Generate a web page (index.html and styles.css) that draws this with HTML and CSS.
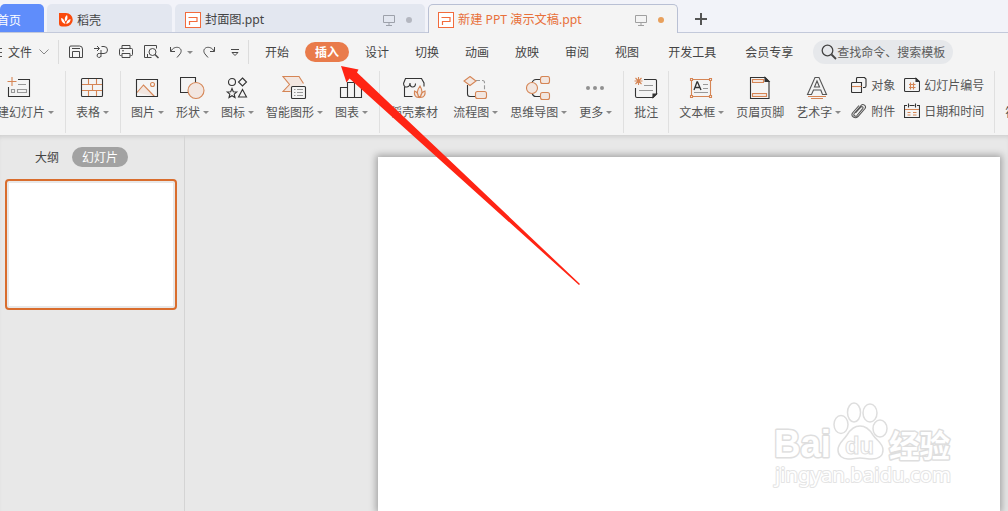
FILE: index.html
```html
<!DOCTYPE html>
<html lang="zh-CN">
  <head>
    <meta charset="UTF-8" />
    <meta name="viewport" content="width=device-width, initial-scale=1.0" />
    <link rel="stylesheet" href="styles.css">
    <title>新建 PPT 演示文稿.ppt</title>
  </head>
  <body>

    <!-- document tabs -->
    <div class="tab-bar">
      <div class="tab home">首页</div>
      <div class="tab docer">
        <svg width="14" height="15" viewBox="0 0 14 15"><path d="M0 1h7a6.500 6.500 0 0 1 0 13.500H3a3 3 0 0 1-3-3z" fill="#fa4a0c"/><path d="M6.500 12C3 11 2 8.500 2.200 6c2 .5 3.300 2 4.300 6zM6.500 9.500C5 7 6 4.500 8 3c1 2.500 .5 5-1.500 6.500zM7.300 12c0-2.500 1.500-4.500 4.200-5 .2 2.500-1.200 4.500-4.200 5z" fill="#fff"/></svg>
        <span>稻壳</span>
      </div>
      <div class="tab file">
        <svg width="16" height="16" viewBox="0 0 16 16" fill="none" stroke="#f26b3c"><rect x=".5" y=".5" width="15" height="15" fill="#fff"/><path d="M3.500 5.500h8.500v4H4.500V13" stroke-width="1.200"/></svg>
        <span class="name">封面图.ppt</span>
        <svg width="12" height="12" viewBox="0 0 12 12" fill="none" stroke="#9da1aa"><path d="M1 1.500h10.500v7H.5v-7zM6 8.500v3M3 11.500h6"/></svg>
        <i class="dot"></i>
      </div>
      <div class="tab file active">
        <svg width="16" height="16" viewBox="0 0 16 16" fill="none" stroke="#f26b3c"><rect x=".5" y=".5" width="15" height="15" fill="#fff"/><path d="M3.500 5.500h8.500v4H4.500V13" stroke-width="1.200"/></svg>
        <span class="name">新建 PPT 演示文稿.ppt</span>
        <svg width="12" height="12" viewBox="0 0 12 12" fill="none" stroke="#a0a0a0"><path d="M1 1.500h10.500v7H.5v-7zM6 8.500v3M3 11.500h6"/></svg>
        <i class="dot"></i>
      </div>
      <svg class="plus" width="12" height="12" viewBox="0 0 12 12" stroke="#555" stroke-width="2"><path d="M6 0v12M0 6h12"/></svg>
    </div>

    <!-- menu row -->
    <div class="menu-bar">
      <div class="file-menu">
        <svg width="4" height="12" viewBox="0 0 4 12" stroke="#555"><path d="M0 2.500h2M0 6.500h2M0 10.500h2"/></svg>
        <span>文件</span>
        <svg width="10" height="6" viewBox="0 0 10 6" fill="none" stroke="#888"><path d="M.5 .5L5 5 9.500 .5"/></svg>
      </div>
      <div class="quick">
        <svg width="16" height="16" viewBox="0 0 16 16"><path d="M1.500 3v10.500h13V5q0-3-3-3H3q-1.500 0-1.500 1zM4.500 13.500v-6h7v6M4 4.500h8"/></svg>
        <svg width="16" height="16" viewBox="0 0 16 16"><path d="M1 4.500h5M4 2l2.500 2.500L4 7M8.500 2.500H11a3.500 3.500 0 0 1 0 7H6.500M8 6v6.500M8 12a2 2 0 1 1-1.500-2.500"/></svg>
        <svg width="16" height="16" viewBox="0 0 16 16"><path d="M4 4.500v-3h8v3M3.500 11.500h-1a1 1 0 0 1-1-1v-5a1 1 0 0 1 1-1h11a1 1 0 0 1 1 1v5a1 1 0 0 1-1 1h-1M4 9.500h8v4H4zM4 6.800h2"/></svg>
        <svg width="17" height="16" viewBox="0 0 17 16"><path d="M13.500 4.500v-3h-12v12h7M4.500 10v3.500"/><circle cx="9.500" cy="8" r="3.500"/><path d="M12 10.500l3.500 3.500" stroke-width="1.500"/></svg>
        <svg class="undo" width="14" height="14" viewBox="0 0 14 14"><path d="M1.500 2v4.500H6M1.800 6.200C4 2.500 7 2 9.500 2.500c3.500 1.500 3 4.500 1.500 6.500L8 12.500"/></svg>
        <i class="caret"></i>
        <svg class="redo" width="14" height="14" viewBox="0 0 14 14"><path d="M12.500 2v4.500H8M12.200 6.200C10 2.500 7 2 4.500 2.500c-3.500 1.500-3 4.500-1.500 6.500L6 12.500"/></svg>
        <svg class="more" width="8" height="9" viewBox="0 0 8 9"><path d="M0 1.500h8M1 4.500h6L4 7.500z"/></svg>
      </div>
      <div class="menus">
        <span>开始</span>
        <span class="current">插入</span>
        <span>设计</span>
        <span>切换</span>
        <span>动画</span>
        <span>放映</span>
        <span>审阅</span>
        <span>视图</span>
        <span class="wide">开发工具</span>
        <span class="wide">会员专享</span>
      </div>
      <div class="search">
        <svg width="16" height="16" viewBox="0 0 16 16" fill="none" stroke="#444" stroke-width="1.300"><circle cx="6.500" cy="6.500" r="5.300"/><path d="M10.500 10.500l4.500 4.500" stroke-width="1.800"/></svg>
        <span>查找命令、搜索模板</span>
      </div>
    </div>

    <!-- insert ribbon -->
    <div class="ribbon">
      <div class="group first">
        <div class="tool">
          <svg width="25" height="25" viewBox="0 0 25 25"><path d="M11 3.500h11.500v17H1.500V11"/><path class="o" d="M5 1v9M.5 5.500h9"/><path class="g" d="M11 8.500h8M4.500 13.500h3v3h-3zM10.500 13.500h9v3h-9z"/></svg>
          <label>新建幻灯片<i class="caret"></i></label>
        </div>
      </div>
      <div class="group">
        <div class="tool">
          <svg width="25" height="25" viewBox="0 0 25 25"><path class="o" d="M2 8.500h21M2 14.500h21M8.500 3v5.500M8.500 14.500v6M12.500 8.500v6M16.500 3v5.500M16.500 14.500v6"/><rect x="1.500" y="2.500" width="21" height="18" rx="1"/></svg>
          <label>表格<i class="caret"></i></label>
        </div>
      </div>
      <div class="group">
        <div class="tool">
          <svg width="25" height="25" viewBox="0 0 25 25"><path class="o f" d="M2 16.500L8.500 9l11 11.500"/><path d="M1.500 3.500h21v17h-21z"/><circle class="o" cx="17.500" cy="8.500" r="2"/></svg>
          <label>图片<i class="caret"></i></label>
        </div>
        <div class="tool">
          <svg width="25" height="25" viewBox="0 0 25 25"><path d="M15.500 8V1.500h-15v15H8"/><circle class="o f" cx="16" cy="14.500" r="8"/></svg>
          <label>形状<i class="caret"></i></label>
        </div>
        <div class="tool">
          <svg width="25" height="25" viewBox="0 0 25 25"><circle cx="7" cy="6" r="3.500"/><path d="M17.500 2l4 4-4 4-4-4zM17.500 13.500l4 7.500h-8zM7 12.500l1.300 3.200 3.500.3-2.600 2.200.8 3.300-3-1.800-3 1.800.8-3.300L2.200 16l3.500-.3z"/></svg>
          <label>图标<i class="caret"></i></label>
        </div>
        <div class="tool">
          <svg width="25" height="25" viewBox="0 0 25 25"><path class="o f" d="M8.500 15.500H1l6.500-7L1 .5h16l4.500 7"/><rect class="bg" x="9.500" y="10.500" width="14" height="12" rx="1"/><path class="g" d="M12 13.500h1.500M15 13.500h6M12 16.500h1.500M15 16.500h6M12 19.500h1.500M15 19.500h6"/></svg>
          <label>智能图形<i class="caret"></i></label>
        </div>
        <div class="tool">
          <svg width="25" height="25" viewBox="0 0 25 25"><path d="M1.500 11.500h7v10h-7zM8.500 6.500h7v15h-7zM15.500 1.500h7v20h-7z"/></svg>
          <label>图表<i class="caret"></i></label>
        </div>
      </div>
      <div class="group loose">
        <div class="tool">
          <svg width="24" height="25" viewBox="0 0 24 25"><path d="M2.500 11v9.500h8M1.500 7.500l2-5h16l2.500 4.500v3.500M1.500 7.500q.5 4 3.500 3.500 3-.5 3-4 0 4 2.500 4 3 0 3-3.500"/><path class="o f" d="M17.500 21.500c-3-3-2.500-7.500 .5-11.500 2.500 4 2.500 8.500-.5 11.500zM16.500 21.500c-3.500 0-4.500-3-4-6.500 2.500 1 4 3.500 4 6.500zM18.500 21.500c4 0 5-3 4.500-6.500-3 1-4.500 3.500-4.500 6.500z"/></svg>
          <label>稻壳素材</label>
        </div>
        <div class="tool">
          <svg width="25" height="25" viewBox="0 0 25 25"><path d="M4.500 9v9q0 2.500 2.500 2.500h5"/><path class="g" d="M13 4.500h6.500q2 0 2 2V15" stroke-dasharray="4 2"/><path class="o f" d="M7 .5l6 4.500-6 4.500L1 5z"/><rect class="o f" x="12.500" y="15.500" width="11" height="7" rx="2"/></svg>
          <label>流程图<i class="caret"></i></label>
        </div>
        <div class="tool">
          <svg width="25" height="25" viewBox="0 0 25 25"><path d="M14 3.500h-4Q7 3.500 6 7M6 17q1 3.500 4 3.500h4"/><circle class="o f" cx="6" cy="12" r="5.500"/><rect class="o f" x="14.500" y=".5" width="9" height="7" rx="2"/><rect class="o f" x="14.500" y="16.500" width="9" height="7" rx="2"/></svg>
          <label>思维导图<i class="caret"></i></label>
        </div>
        <div class="tool">
          <svg class="dots" width="25" height="25" viewBox="0 0 25 25"><circle cx="5" cy="12" r="2"/><circle cx="12" cy="12" r="2"/><circle cx="19" cy="12" r="2"/></svg>
          <label>更多<i class="caret"></i></label>
        </div>
      </div>
      <div class="group tight">
        <div class="tool">
          <svg width="24" height="25" viewBox="0 0 24 25"><path d="M10 3.500h11.500q1 0 1 1V18L19 21.500H3q-1.500 0-1.500-1.500v-8"/><path d="M19 21.500V18h3.500z" fill="#333"/><path class="o" d="M4.500 1v8M.5 5h8M1.500 2l6 6M7.500 2l-6 6"/><path class="g" d="M10 9.500h9M5 14.500h14"/></svg>
          <label>批注</label>
        </div>
      </div>
      <div class="group last">
        <div class="tool">
          <svg width="25" height="25" viewBox="0 0 25 25"><path class="o" d="M2.500 3.500h19v17h-19z"/><path class="g" d="M14 8.500h5M14 12.500h5M5 16.500h14"/><path d="M5 14L8 6h.5l3.500 8M6.500 11.500h4" stroke-width="1.300"/><path class="o w" d="M1.500 2.500h2v2h-2zM20.500 2.500h2v2h-2zM1.500 19.500h2v2h-2zM20.500 19.500h2v2h-2z"/></svg>
          <label>文本框<i class="caret"></i></label>
        </div>
        <div class="tool">
          <svg width="24" height="25" viewBox="0 0 24 25"><path d="M2.500 1.500H17l4 4v17H2.500z"/><path d="M17 1.500l4 4h-4z" fill="#333"/><path class="o f" d="M4.500 3.500h11v3h-11zM4.500 17.500h14v3h-14z"/></svg>
          <label>页眉页脚</label>
        </div>
        <div class="tool">
          <svg width="25" height="25" viewBox="0 0 25 25"><path class="a" d="M1.500 18.500L9 1.500h4l7.500 17h-4l-1.700-4.500H7.500L5.500 18.500zM8.500 11h5L11 5z"/><path class="o" d="M2 20.500h18M5 22.500h12"/></svg>
          <label>艺术字<i class="caret"></i></label>
        </div>
        <div class="small-tools">
          <div><svg width="16" height="16" viewBox="0 0 16 16"><path d="M5.500 5V1.500q0-1 1-1h7l1.500 1.500v7q0 1.500-1.500 1.500H12M1.500 5.500h9v10h-9q-1 0-1-1v-8q0-1 1-1z"/><path class="o" d="M1 9.500h9.500"/></svg>对象</div>
          <div><svg width="16" height="16" viewBox="0 0 16 16"><path d="M1.500 1.500H12l3.500 3v9q0 1-1 1h-13q-1 0-1-1v-11q0-1 1-1z"/><path d="M12 1.500l3 3h-3z" fill="#333"/><path class="o" d="M6.500 5.500v7M9.500 5.500v7M5 7.500h6.500M5 10.500h6.500"/></svg>幻灯片编号</div>
          <div><svg width="16" height="16" viewBox="0 0 16 16"><path class="a" d="M4.500 10l5.500-6c1-1 2.700.3 1.700 1.600L6 12.500c-1.500 1.700-4.200-.2-2.800-2L10 2.500c2-2.200 5.800.2 4 3L7 13.500c-3 3-7.500-.3-5.500-3.500L8 2.500"/></svg>附件</div>
          <div><svg width="16" height="16" viewBox="0 0 16 16"><path d="M3 2.500H.5v12h15v-12H13M5.500 2.500h5M4.500 .5v4M11.500 .5v4"/><path class="o" d="M1 6.500h14M3.500 9.500h3M9 9.500h3.500M3.500 12h3M9 12h3.500"/></svg>日期和时间</div>
        </div>
      </div>
      <div class="group">
        <div class="tool symbol"><label>符号</label></div>
      </div>
    </div>

    <!-- workspace -->
    <div class="workspace">
      <div class="sidebar">
        <div class="side-tabs">
          <span>大纲</span>
          <span class="on">幻灯片</span>
        </div>
        <div class="thumb"></div>
      </div>
      <div class="canvas">
        <div class="slide">
          <svg class="watermark" width="190" height="96" viewBox="0 0 190 96">
            <g class="mark">
              <text class="bai" x="6" y="58" textLength="57" lengthAdjust="spacingAndGlyphs">Bai</text>
              <text class="jy" x="121" y="57.500" textLength="61" lengthAdjust="spacingAndGlyphs">经验</text>
              <text class="url" x="7" y="83" textLength="176" lengthAdjust="spacingAndGlyphs">jingyan.baidu.com</text>
            </g>
            <g class="paw">
              <ellipse cx="73" cy="25.500" rx="7" ry="9"/>
              <ellipse cx="86" cy="13.500" rx="6.500" ry="9.500"/>
              <ellipse cx="102" cy="14" rx="7" ry="9"/>
              <ellipse cx="112" cy="29.500" rx="7" ry="8.500"/>
              <path d="M92 27c6 0 10 4 13 9 4 6 10 8 10 15 0 7-6 9-11 9-5 0-8-1-12-1s-7 1-12 1c-5 0-10-3-10-9 0-7 5-9 9-15 3-5 7-9 13-9z"/>
            </g>
            <text class="du" x="77" y="54.500" textLength="29" lengthAdjust="spacingAndGlyphs">du</text>
          </svg>
        </div>
      </div>
    </div>

    <!-- pointer arrow over the page -->
    <svg class="arrow" width="240" height="222" viewBox="0 0 240 222"><path d="M0 0l17.500 3.500L16 6.500 239 218 238 219 8.500 12.500 5.500 16.500z" fill="#ff2414"/></svg>
  </body>
</html>
```

FILE: styles.css
```css
* {
  box-sizing: border-box;
}

body {
  margin: 0;
  width: 1008px;
  height: 511px;
  overflow: hidden;
  position: relative;
  display: flex;
  flex-direction: column;
  background-color: #f4f4f4;
  color: #444;
  font-family: "Noto Sans CJK SC", sans-serif;
  font-size: 12px;
  line-height: 16px;
  white-space: nowrap;
}

svg {
  flex: none;
  display: block;
}

/* tabs */
.tab-bar {
  display: flex;
  gap: 3px;
  height: 33px;
  padding-top: 4px;
  background-color: #f2f3f9;
  box-shadow: inset 0 -1px #c3c9da;
}

.tab {
  display: flex;
  align-items: center;
  height: 28px;
  padding-top: 3px;
  border-radius: 5px 5px 0 0;
  background-color: #e3e7f0;
}

.home {
  width: 44px;
  text-indent: -3px;
  background-color: #5f8dfb;
  color: #fff;
}

.docer {
  width: 125px;
  padding-left: 12px;
  gap: 4px;
}

.file {
  width: 250px;
  padding-left: 10px;
  padding-right: 13px;
}

.file .name {
  margin-left: 4px;
  margin-right: auto;
  padding-top: 1px;
  font-family: "Noto Sans", "Noto Sans CJK SC", sans-serif;
  font-size: 12.2px;
}

.active {
  height: 29px;
  padding-left: 9px;
  padding-top: 1px;
  background-color: #f4f4f4;
  border: 1px solid #b9c0d4;
  border-bottom: none;
  color: #e8703a;
}

.dot {
  width: 6px;
  height: 6px;
  margin-left: 11px;
  border-radius: 50%;
  background-color: #b4b7c0;
}

.active .dot {
  background-color: #e8a05c;
}

.plus {
  margin: 9px 0 0 14px;
}

/* menu */
.menu-bar {
  display: flex;
  align-items: center;
  height: 38px;
}

.file-menu {
  display: flex;
  align-items: center;
  width: 59px;
  height: 24px;
  border-right: 1px solid #dcdcdc;
}

.file-menu span {
  margin: 0 7px 0 4px;
}

.quick {
  display: flex;
  align-items: center;
  width: 190px;
  height: 24px;
  padding-left: 9px;
  gap: 9px;
  border-right: 1px solid #dcdcdc;
}

.quick svg {
  fill: none;
  stroke: #484848;
}

.quick .caret {
  margin-left: -5px;
}

.quick .more {
  margin-left: 6px;
}

.caret {
  display: inline-block;
  border: 3px solid transparent;
  border-top-color: #8a8a8a;
  border-bottom: none;
}

.menus {
  display: flex;
  gap: 6px;
  margin-left: 6px;
}

.menus span {
  padding: 2px 10px;
  border-radius: 10px;
}

.menus .current {
  background-color: #e97b4b;
  color: #fff;
  font-weight: bold;
}

.menus .wide {
  margin-left: 3px;
}

.search {
  display: flex;
  align-items: center;
  width: 140px;
  height: 24px;
  margin-left: 10px;
  padding-left: 8px;
  border-radius: 12px;
  background-color: #e6e8eb;
  color: #5c5c5c;
}

/* ribbon */
.ribbon {
  display: flex;
  height: 64px;
  padding-bottom: 2px;
  color: #555;
}

.group {
  flex: none;
  display: flex;
  gap: 12px;
  padding: 5px 11px 0 10px;
  border-right: 1px solid #e0e0e0;
}

.first {
  margin-left: -25px;
}

.loose .tool:first-child {
  margin-right: 3px;
}

.tight {
  padding-right: 10px;
}

.last {
  padding-right: 9px;
}

.tool {
  display: flex;
  flex-direction: column;
  align-items: center;
  gap: 3px;
}

.tool label {
  display: flex;
  align-items: center;
  gap: 3px;
}

.tool.symbol {
  padding-top: 28px;
}

.ribbon svg {
  fill: none;
  stroke: #333;
  stroke-width: 1.1;
}

.ribbon .o {
  stroke: #d58555;
}

.ribbon .f {
  fill: #f2e6e0;
}

.ribbon .g {
  stroke: #999;
}

.ribbon .w,
.ribbon .bg {
  fill: #f4f4f4;
}

.ribbon .a {
  stroke: #555;
}

.ribbon .dots {
  fill: #909090;
  stroke: none;
}

.small-tools {
  display: grid;
  grid-template-columns: 44px 81px;
  grid-template-rows: 16px 16px;
  gap: 10px 9px;
  margin-left: -2px;
  padding-top: 1px;
}

.small-tools div {
  display: flex;
  gap: 4px;
}

/* workspace */
.workspace {
  flex: 1;
  display: flex;
  min-height: 0;
  background-color: #e8e8e8;
  box-shadow: inset 0 4px 4px -2px #cfcfcf;
}

.sidebar {
  width: 185px;
  padding: 12px 7px 0 5px;
  border-right: 1px solid #d4d4d4;
}

.side-tabs {
  display: flex;
  align-items: center;
  gap: 13px;
  padding-left: 30px;
}

.side-tabs .on {
  padding: 2px 10px;
  border-radius: 10px;
  background-color: #a2a2a2;
  color: #fff;
}

.thumb {
  height: 131px;
  margin-top: 12px;
  padding: 2px;
  border: 2px solid #d96d2d;
  border-radius: 4px;
  background: #fff content-box;
  box-shadow: inset 0 0 0 2px #e8e8e8;
}

.canvas {
  flex: 1;
  display: flex;
  padding: 22px 8px 0 193px;
  overflow: hidden;
}

.slide {
  flex: 1;
  display: flex;
  justify-content: flex-end;
  align-items: flex-end;
  padding: 0 42px 16px 0;
  background-color: #fff;
  box-shadow: 0 0 7px 2px rgba(0, 0, 0, 0.3);
}

/* watermark */
.watermark {
  fill: #fff;
  stroke: #dedede;
  stroke-width: 1.5;
}

.mark text {
  stroke-width: 3;
  paint-order: stroke;
  stroke-linejoin: round;
}

.bai {
  font: bold 39px "Liberation Sans", sans-serif;
}

.jy {
  font: bold 31px "Noto Sans CJK SC", sans-serif;
}

.mark .url {
  font: 20px "Noto Sans", sans-serif;
  stroke-width: 2;
  stroke: #e4e4e4;
}

.du {
  font: bold 23px "Liberation Sans", sans-serif;
  stroke-width: 1;
}

.arrow {
  position: absolute;
  left: 341px;
  top: 66px;
}
```
